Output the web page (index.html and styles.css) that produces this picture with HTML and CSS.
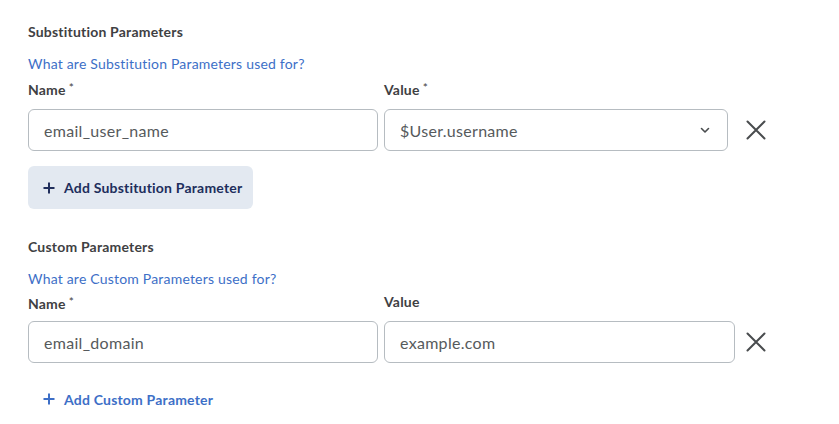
FILE: index.html
```html
<!DOCTYPE html>
<html>
<head>
<meta charset="utf-8">
<link rel="stylesheet" href="styles.css">
</head>
<body>
<div class="page">
  <section class="section">
    <h3 class="heading">Substitution Parameters</h3>
    <a class="help" href="#">What are Substitution Parameters used for?</a>
    <div class="labels">
      <div class="label name-col">Name<span class="req">*</span></div>
      <div class="label">Value<span class="req">*</span></div>
    </div>
    <div class="row">
      <div class="field name-col">email_user_name</div>
      <div class="field select">
        <span>$User.username</span>
        <svg class="chev" width="10" height="7" viewBox="0 0 10 7"><path d="M1.5 1.5 L5 5 L8.5 1.5" fill="none" stroke="#494c4e" stroke-width="1.6" stroke-linecap="round" stroke-linejoin="round"/></svg>
      </div>
      <button class="close close-a" aria-label="Remove">
        <svg width="20" height="20" viewBox="0 0 20 20"><path d="M1.5 1.5 L18.5 18.5 M18.5 1.5 L1.5 18.5" stroke="#494c4e" stroke-width="2" stroke-linecap="round"/></svg>
      </button>
    </div>
    <button class="add-btn">
      <svg width="12" height="12" viewBox="0 0 12 12"><path d="M6 0.5 V11.5 M0.5 6 H11.5" stroke="#202e5c" stroke-width="2"/></svg>
      <span>Add Substitution Parameter</span>
    </button>
  </section>
  <section class="section second">
    <h3 class="heading">Custom Parameters</h3>
    <a class="help" href="#">What are Custom Parameters used for?</a>
    <div class="labels labels-b">
      <div class="label name-col">Name<span class="req">*</span></div>
      <div class="label">Value</div>
    </div>
    <div class="row row-b">
      <div class="field name-col">email_domain</div>
      <div class="field wide">example.com</div>
      <button class="close close-b" aria-label="Remove">
        <svg width="20" height="20" viewBox="0 0 20 20"><path d="M1.5 1.5 L18.5 18.5 M18.5 1.5 L1.5 18.5" stroke="#494c4e" stroke-width="2" stroke-linecap="round"/></svg>
      </button>
    </div>
    <button class="add-link">
      <svg width="12" height="12" viewBox="0 0 12 12"><path d="M6 0.5 V11.5 M0.5 6 H11.5" stroke="#3d6fc7" stroke-width="2"/></svg>
      <span>Add Custom Parameter</span>
    </button>
  </section>
</div>
</body>
</html>
```
FILE: styles.css
```css
html, body {
  margin: 0;
  padding: 0;
  background: #ffffff;
}
body {
  font-family: Lato, "Open Sans", sans-serif;
  color: #494c4e;
}
.page {
  padding: 22px 0 0 28px;
}
.section {
  display: flex;
  flex-direction: column;
  align-items: flex-start;
}
.second {
  margin-top: 28px;
}
.heading {
  margin: 0;
  font-size: 14px;
  font-weight: 700;
  line-height: 20px;
  letter-spacing: 0.2px;
  color: #3f4143;
}
.help {
  margin-top: 12px;
  font-size: 14px;
  line-height: 20px;
  letter-spacing: 0.2px;
  color: #3d6fc7;
  text-decoration: none;
}
.labels {
  display: flex;
  gap: 6px;
  margin-top: 4px;
}
.labels-b {
  margin-top: 3px;
}
.label {
  font-size: 14px;
  font-weight: 700;
  line-height: 20px;
  letter-spacing: 0.2px;
  color: #3f4143;
}
.req {
  font-weight: 400;
  font-size: 12px;
  vertical-align: 3px;
  margin-left: 3px;
}
.name-col {
  width: 350px;
}
.row {
  display: flex;
  align-items: center;
  gap: 6px;
  margin-top: 9px;
}
.row-b {
  margin-top: 7px;
}
.field {
  box-sizing: border-box;
  height: 42px;
  border: 1px solid #b6bcc1;
  border-radius: 6px;
  padding: 0 15px;
  display: flex;
  align-items: center;
  font-size: 16px;
  letter-spacing: 0.3px;
  color: #565a5c;
}
.select {
  width: 344px;
  justify-content: space-between;
  padding-right: 17px;
}
.wide {
  width: 351px;
}
.chev {
  display: block;
}
.close {
  border: 0;
  background: none;
  padding: 0;
  width: 20px;
  height: 20px;
  display: flex;
  align-items: center;
  justify-content: center;
}
.close-a {
  margin-left: 12px;
}
.close-b {
  margin-left: 5px;
}
.add-btn {
  margin-top: 15px;
  height: 43px;
  border: 0;
  border-radius: 6px;
  background: #e3e9f1;
  padding: 0 11px 0 15px;
  display: flex;
  align-items: center;
  gap: 9px;
  font-family: Lato, "Open Sans", sans-serif;
  font-size: 14px;
  font-weight: 700;
  letter-spacing: 0.2px;
  color: #202e5c;
}
.add-link {
  margin-top: 17px;
  height: 38px;
  border: 0;
  background: none;
  padding: 0 0 0 15px;
  display: flex;
  align-items: center;
  gap: 9px;
  font-family: Lato, "Open Sans", sans-serif;
  font-size: 14px;
  font-weight: 700;
  letter-spacing: 0.2px;
  color: #3d6fc7;
}
```
